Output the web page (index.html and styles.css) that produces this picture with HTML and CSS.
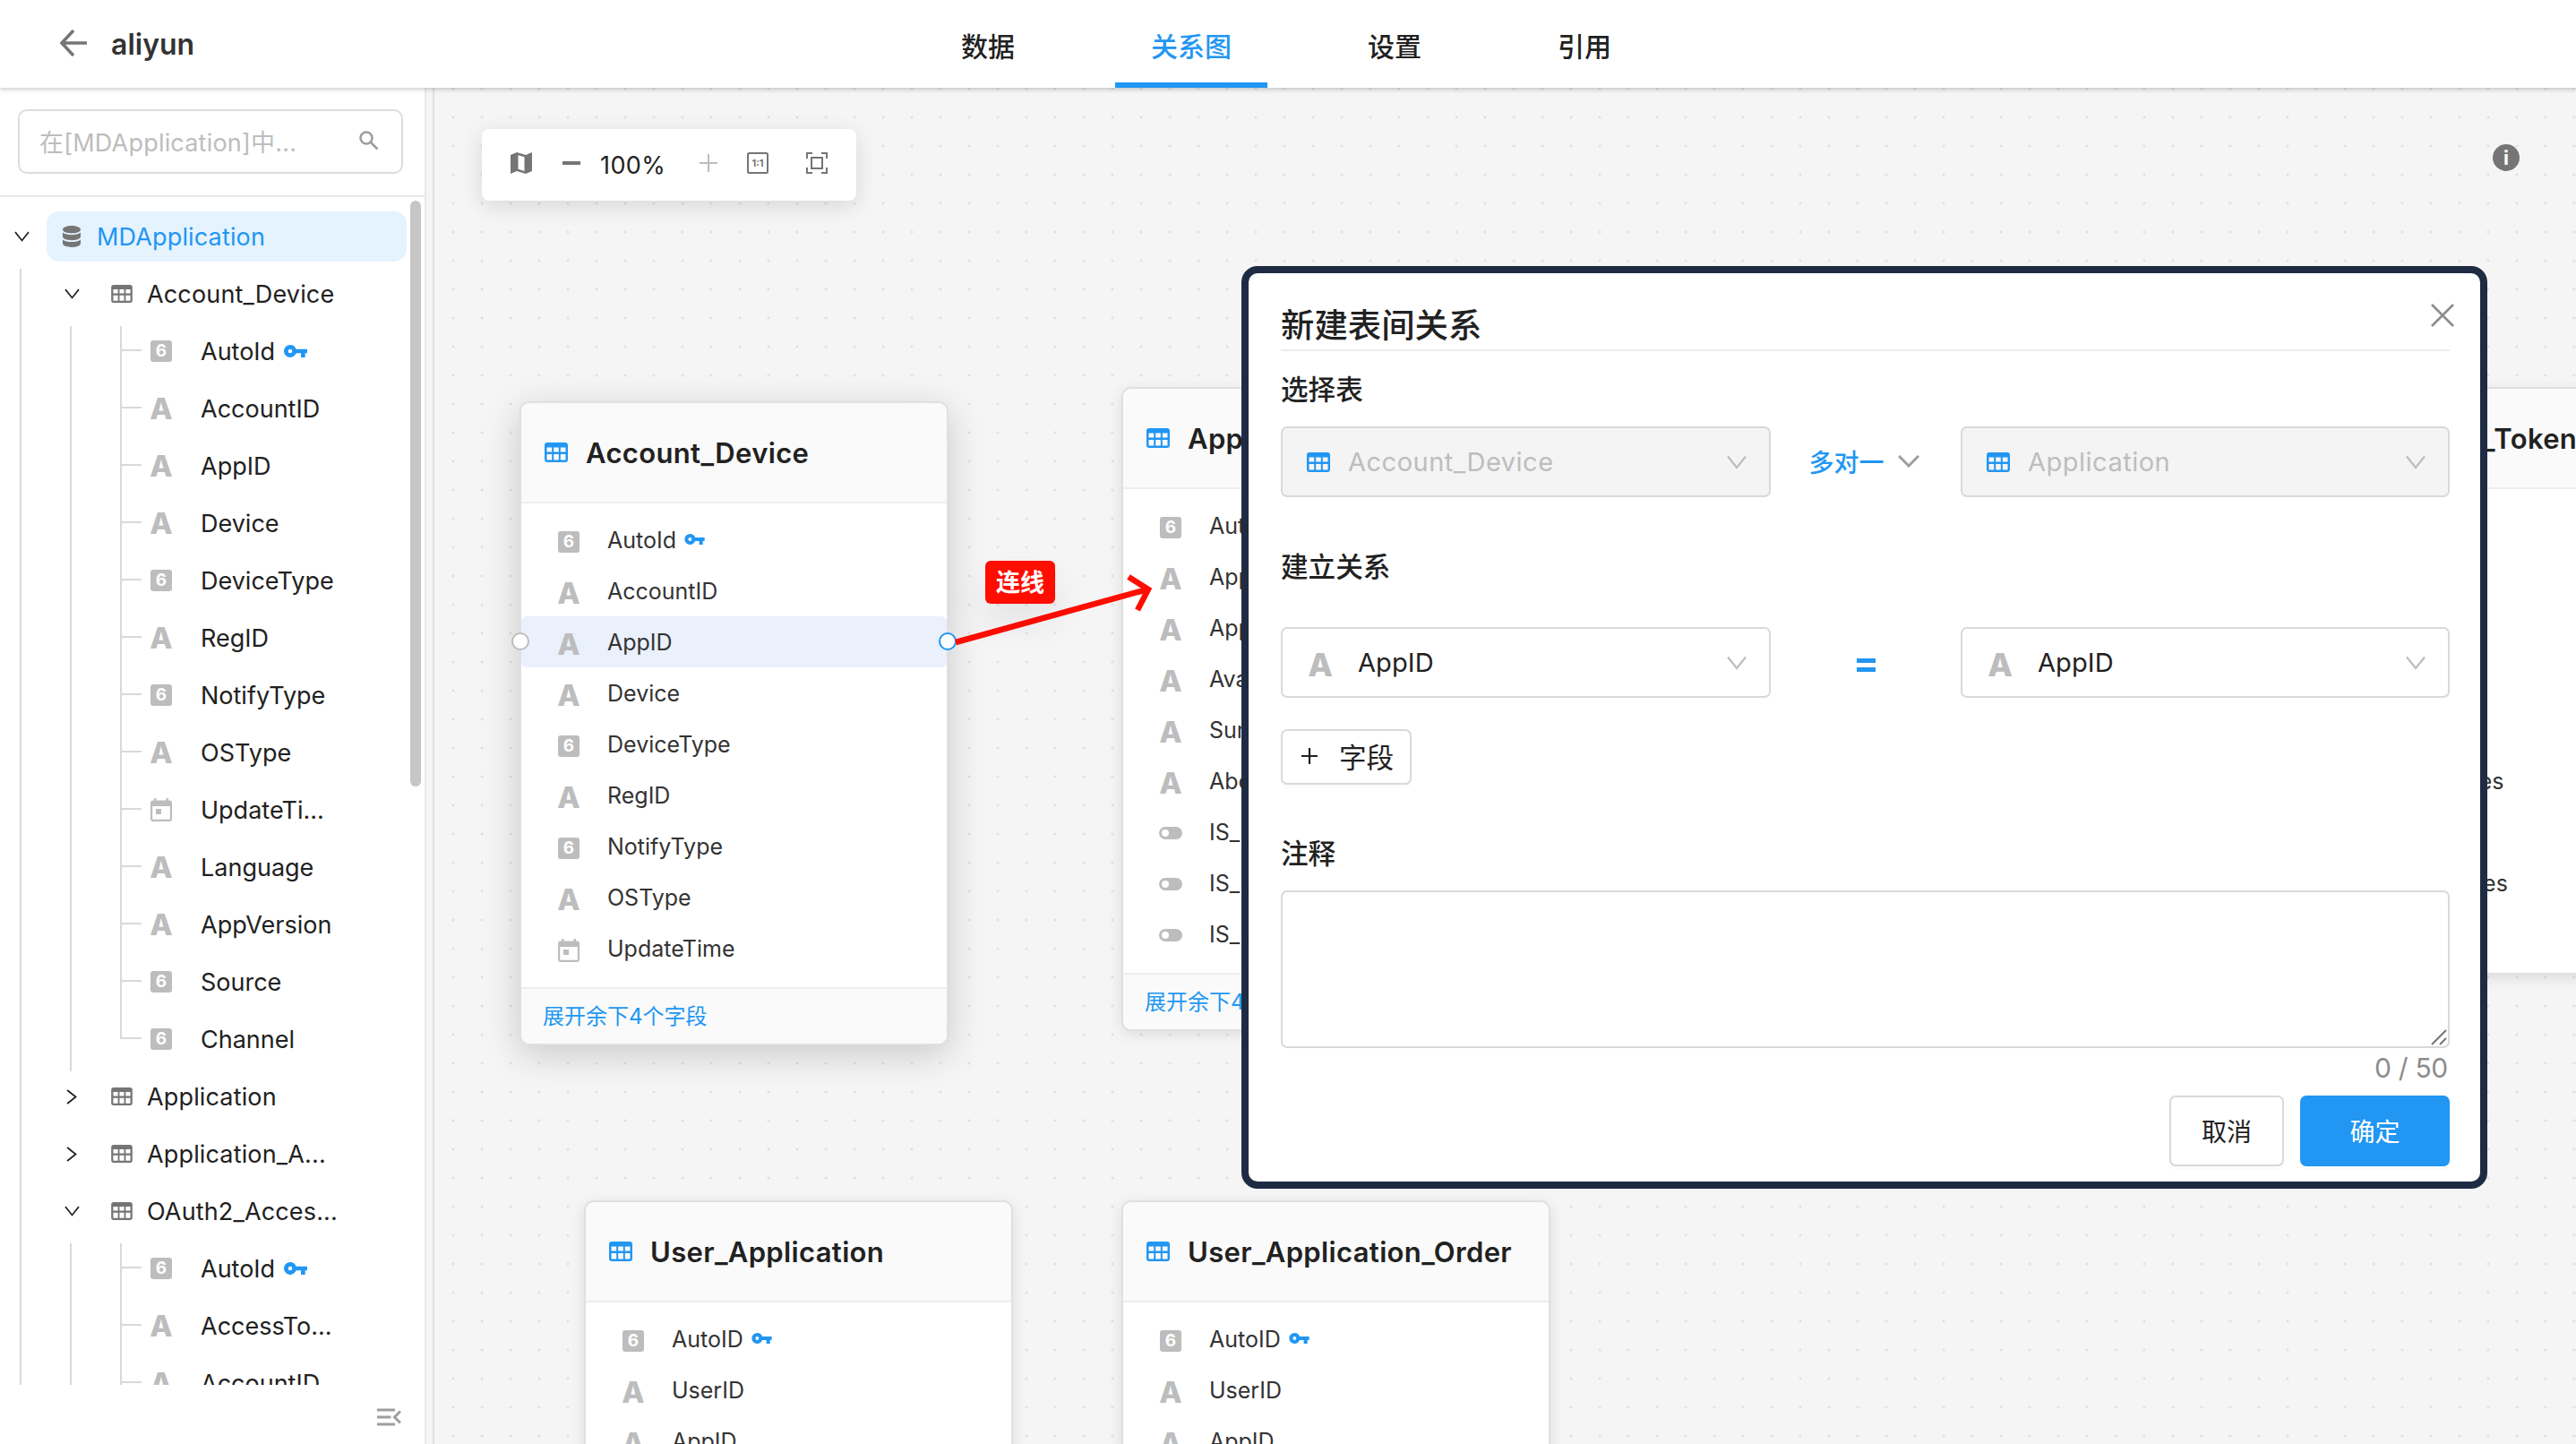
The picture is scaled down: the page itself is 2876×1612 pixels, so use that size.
FILE: index.html
```html
<!DOCTYPE html>
<html lang="zh-CN">
<head>
  <meta charset="UTF-8" />
  <meta name="viewport" content="width=device-width, initial-scale=1.0"/>
  <title>aliyun - 关系图</title>
  <link rel="stylesheet" href="styles.css">
</head>
<body>

  <!-- Icon sprite -->
  <svg class="sprite" xmlns="http://www.w3.org/2000/svg">
    <symbol id="i-table" viewBox="0 0 26 22">
      <path fill="currentColor" fill-rule="evenodd" d="M3 0H23Q26 0 26 3V19Q26 22 23 22H3Q0 22 0 19V3Q0 0 3 0ZM2.500 5.500V10.500H8.200V5.500ZM10.200 5.500V10.500H15.800V5.500ZM17.800 5.500V10.500H23.500V5.500ZM2.500 13V19.500H8.200V13ZM10.200 13V19.500H15.800V13ZM17.800 13V19.500H23.500V13Z"/>
    </symbol>
    <symbol id="i-db" viewBox="0 0 20 24">
      <path fill="currentColor" d="M10 0C15.500 0 20 1.800 20 4.200S15.500 8.400 10 8.400 0 6.600 0 4.200 4.500 0 10 0ZM0 7.600C2 9.500 6 10.200 10 10.200S18 9.500 20 7.600V12C20 14.400 15.500 16.200 10 16.200S0 14.400 0 12ZM0 15.400C2 17.300 6 18 10 18S18 17.300 20 15.400V19.800C20 22.200 15.500 24 10 24S0 22.200 0 19.800Z"/>
    </symbol>
    <symbol id="i-key" viewBox="0 0 26 14">
      <path fill="currentColor" fill-rule="evenodd" d="M7 0A7 7 0 0 1 13.600 4.700H26V9.300H23.700V14H19V9.300H13.600A7 7 0 1 1 7 0ZM7 4.700A2.300 2.300 0 1 0 7 9.300 2.300 2.300 0 1 0 7 4.700Z"/>
    </symbol>
    <symbol id="i-date" viewBox="0 0 24 26">
      <path fill="currentColor" fill-rule="evenodd" d="M4 0H6.500V2.500H17.500V0H20V2.500H21Q24 2.500 24 5.500V23Q24 26 21 26H3Q0 26 0 23V5.500Q0 2.500 3 2.500H4ZM2.200 9V23.800H21.800V9ZM6 12H12V18H6Z"/>
    </symbol>
    <symbol id="i-switch" viewBox="0 0 26 14">
      <path fill="currentColor" fill-rule="evenodd" d="M7 0H19A7 7 0 0 1 19 14H7A7 7 0 0 1 7 0ZM7 3A4 4 0 1 0 7 11 4 4 0 1 0 7 3Z"/>
    </symbol>
    <symbol id="i-down" viewBox="0 0 22 16">
      <path fill="none" stroke="currentColor" stroke-width="2.200" d="M1 1.500L11 14L21 1.500"/>
    </symbol>
    <symbol id="i-right" viewBox="0 0 16 22">
      <path fill="none" stroke="currentColor" stroke-width="2.400" d="M1.500 1L14 11L1.500 21"/>
    </symbol>
  </svg>

  <!-- Header -->
  <header class="header">
    <div class="header-left">
      <svg class="back" viewBox="0 0 30 30"><path d="M30 15H2M15 1L2 15L15 29"/></svg>
      <span class="app-name">aliyun</span>
    </div>
    <nav class="tabs">
      <a class="tab">数据</a>
      <a class="tab active">关系图</a>
      <a class="tab">设置</a>
      <a class="tab">引用</a>
    </nav>
  </header>

  <div class="main">

    <!-- Sidebar -->
    <aside class="sidebar">
      <div class="search-wrap">
        <div class="search">
          <span>在[MDApplication]中...</span>
          <svg viewBox="0 0 22 22"><circle cx="8" cy="8" r="6.500"/><path d="M13 13L20.500 20.500"/></svg>
        </div>
      </div>

      <div class="tree">
        <div class="node selected">
          <span class="switcher"><svg class="caret"><use href="#i-down"/></svg></span>
          <div class="node-title"><svg class="db"><use href="#i-db"/></svg><span>MDApplication</span></div>
        </div>
        <div class="node">
          <i class="indent"></i><span class="switcher"><svg class="caret"><use href="#i-down"/></svg></span>
          <div class="node-title"><svg class="table"><use href="#i-table"/></svg><span>Account_Device</span></div>
        </div>
        <div class="node field"><i class="indent"></i><i class="indent"></i><i class="leaf"></i><b class="num">6</b><span>AutoId</span><svg class="key"><use href="#i-key"/></svg></div>
        <div class="node field"><i class="indent"></i><i class="indent"></i><i class="leaf"></i><b class="txt">A</b><span>AccountID</span></div>
        <div class="node field"><i class="indent"></i><i class="indent"></i><i class="leaf"></i><b class="txt">A</b><span>AppID</span></div>
        <div class="node field"><i class="indent"></i><i class="indent"></i><i class="leaf"></i><b class="txt">A</b><span>Device</span></div>
        <div class="node field"><i class="indent"></i><i class="indent"></i><i class="leaf"></i><b class="num">6</b><span>DeviceType</span></div>
        <div class="node field"><i class="indent"></i><i class="indent"></i><i class="leaf"></i><b class="txt">A</b><span>RegID</span></div>
        <div class="node field"><i class="indent"></i><i class="indent"></i><i class="leaf"></i><b class="num">6</b><span>NotifyType</span></div>
        <div class="node field"><i class="indent"></i><i class="indent"></i><i class="leaf"></i><b class="txt">A</b><span>OSType</span></div>
        <div class="node field"><i class="indent"></i><i class="indent"></i><i class="leaf"></i><svg class="date"><use href="#i-date"/></svg><span>UpdateTi...</span></div>
        <div class="node field"><i class="indent"></i><i class="indent"></i><i class="leaf"></i><b class="txt">A</b><span>Language</span></div>
        <div class="node field"><i class="indent"></i><i class="indent"></i><i class="leaf"></i><b class="txt">A</b><span>AppVersion</span></div>
        <div class="node field"><i class="indent"></i><i class="indent"></i><i class="leaf"></i><b class="num">6</b><span>Source</span></div>
        <div class="node field last"><i class="indent"></i><i class="indent"></i><i class="leaf"></i><b class="num">6</b><span>Channel</span></div>
        <div class="node">
          <i class="indent"></i><span class="switcher"><svg class="caret-right"><use href="#i-right"/></svg></span>
          <div class="node-title"><svg class="table"><use href="#i-table"/></svg><span>Application</span></div>
        </div>
        <div class="node">
          <i class="indent"></i><span class="switcher"><svg class="caret-right"><use href="#i-right"/></svg></span>
          <div class="node-title"><svg class="table"><use href="#i-table"/></svg><span>Application_A...</span></div>
        </div>
        <div class="node">
          <i class="indent"></i><span class="switcher"><svg class="caret"><use href="#i-down"/></svg></span>
          <div class="node-title"><svg class="table"><use href="#i-table"/></svg><span>OAuth2_Acces...</span></div>
        </div>
        <div class="node field"><i class="indent"></i><i class="indent"></i><i class="leaf"></i><b class="num">6</b><span>AutoId</span><svg class="key"><use href="#i-key"/></svg></div>
        <div class="node field"><i class="indent"></i><i class="indent"></i><i class="leaf"></i><b class="txt">A</b><span>AccessTo...</span></div>
        <div class="node field"><i class="indent"></i><i class="indent"></i><i class="leaf"></i><b class="txt">A</b><span>AccountID</span></div>
        <div class="scrollbar"></div>
      </div>

      <div class="sidebar-footer">
        <svg viewBox="0 0 27 20"><path d="M0 2H20M0 10H15.500M0 18H20M26 3.500L19.500 10L26 16.500"/></svg>
      </div>
    </aside>
    <div class="resizer"></div>

    <!-- ER canvas -->
    <section class="canvas">
      <div class="toolbar">
        <svg class="map" viewBox="0 0 24 24"><path d="M0 3L7 0L17 3L24 0V21L17 24L7 21L0 24ZM8.500 3.200V18.800L15.500 21V5.200Z"/></svg>
        <i class="minus"></i>
        <span class="zoom">100%</span>
        <svg class="plus" viewBox="0 0 20 20"><path d="M10 0V20M0 10H20"/></svg>
        <svg class="one" viewBox="0 0 24 24"><rect x="1" y="1" width="22" height="22" rx="1.500"/><text x="12" y="16">1:1</text></svg>
        <svg class="fit" viewBox="0 0 24 24"><path d="M1 7V1H7M17 1H23V7M23 17V23H17M7 23H1V17M6 6H18V18H6Z"/></svg>
      </div>

      <div class="info">i</div>

      <div class="card hover account-device">
        <div class="card-head"><svg><use href="#i-table"/></svg>Account_Device</div>
        <div class="card-body">
          <div class="row"><b class="num">6</b>AutoId<svg class="key"><use href="#i-key"/></svg></div>
          <div class="row"><b class="txt">A</b>AccountID</div>
          <div class="row current"><b class="txt">A</b>AppID<i class="port left"></i><i class="port right"></i></div>
          <div class="row"><b class="txt">A</b>Device</div>
          <div class="row"><b class="num">6</b>DeviceType</div>
          <div class="row"><b class="txt">A</b>RegID</div>
          <div class="row"><b class="num">6</b>NotifyType</div>
          <div class="row"><b class="txt">A</b>OSType</div>
          <div class="row"><svg class="date"><use href="#i-date"/></svg>UpdateTime</div>
        </div>
        <div class="card-foot">展开余下4个字段</div>
      </div>

      <div class="card application">
        <div class="card-head"><svg><use href="#i-table"/></svg>Application</div>
        <div class="card-body">
          <div class="row"><b class="num">6</b>AutoId</div>
          <div class="row"><b class="txt">A</b>AppID</div>
          <div class="row"><b class="txt">A</b>AppName</div>
          <div class="row"><b class="txt">A</b>Avatar</div>
          <div class="row"><b class="txt">A</b>Summary</div>
          <div class="row"><b class="txt">A</b>About</div>
          <div class="row"><svg class="switch"><use href="#i-switch"/></svg>IS_</div>
          <div class="row"><svg class="switch"><use href="#i-switch"/></svg>IS_</div>
          <div class="row"><svg class="switch"><use href="#i-switch"/></svg>IS_</div>
        </div>
        <div class="card-foot">展开余下4个字段</div>
      </div>

      <div class="card access-token">
        <div class="card-head"><svg><use href="#i-table"/></svg>OAuth2_Access_Token</div>
        <div class="card-body">
          <div class="row"></div>
          <div class="row"></div>
          <div class="row"></div>
          <div class="row"></div>
          <div class="row"></div>
          <div class="row"><b class="txt">A</b>AccessTokenExpires</div>
          <div class="row"></div>
          <div class="row"><b class="txt">A</b>RefreshTokenExpires</div>
          <div class="row"></div>
        </div>
      </div>

      <div class="card user-application">
        <div class="card-head"><svg><use href="#i-table"/></svg>User_Application</div>
        <div class="card-body">
          <div class="row"><b class="num">6</b>AutoID<svg class="key"><use href="#i-key"/></svg></div>
          <div class="row"><b class="txt">A</b>UserID</div>
          <div class="row"><b class="txt">A</b>AppID</div>
        </div>
      </div>

      <div class="card user-application-order">
        <div class="card-head"><svg><use href="#i-table"/></svg>User_Application_Order</div>
        <div class="card-body">
          <div class="row"><b class="num">6</b>AutoID<svg class="key"><use href="#i-key"/></svg></div>
          <div class="row"><b class="txt">A</b>UserID</div>
          <div class="row"><b class="txt">A</b>AppID</div>
        </div>
      </div>

      <!-- Connection being drawn -->
      <svg class="link" viewBox="0 0 230 90"><path d="M5 81L219 22M198 8L220 22L208 45"/></svg>
      <div class="link-label">连线</div>
    </section>
  </div>

  <!-- New relation dialog -->
  <div class="modal">
    <svg class="close" viewBox="0 0 26 26"><path d="M1 1L25 25M25 1L1 25"/></svg>
    <h2>新建表间关系</h2>

    <h3 class="label-first">选择表</h3>
    <div class="pair pair-tables">
      <div class="select disabled"><svg class="table"><use href="#i-table"/></svg><span>Account_Device</span><svg class="arrow"><use href="#i-down"/></svg></div>
      <div class="relation">多对一<svg viewBox="0 0 24 14"><path d="M1 1L12 12L23 1"/></svg></div>
      <div class="select disabled"><svg class="table"><use href="#i-table"/></svg><span>Application</span><svg class="arrow"><use href="#i-down"/></svg></div>
    </div>

    <h3 class="label-relation">建立关系</h3>
    <div class="pair pair-fields">
      <div class="select"><b class="txt">A</b><span>AppID</span><svg class="arrow"><use href="#i-down"/></svg></div>
      <div class="equal"></div>
      <div class="select"><b class="txt">A</b><span>AppID</span><svg class="arrow"><use href="#i-down"/></svg></div>
    </div>
    <div class="btn add-field"><svg viewBox="0 0 18 18"><path d="M9 0V18M0 9H18"/></svg><span>字段</span></div>

    <h3 class="label-note">注释</h3>
    <div class="note"><svg viewBox="0 0 18 18"><path d="M1 17L17 1M10 17L17 10"/></svg></div>
    <div class="count">0 / 50</div>
    <div class="modal-footer">
      <div class="btn cancel">取消</div>
      <div class="btn primary">确定</div>
    </div>
  </div>

</body>
</html>
```
FILE: styles.css
```css
* {
  box-sizing: border-box;
}

body {
  margin: 0;
  height: 1612px;
  overflow: hidden;
  position: relative;
  display: flex;
  flex-direction: column;
  font-family: Inter, "Noto Sans CJK SC", sans-serif;
  font-size: 27px;
  color: #212121;
  background: #f5f5f5;
}

svg {
  display: block;
  flex-shrink: 0;
}

.sprite {
  position: absolute;
  width: 0;
  height: 0;
}

/* Header */
.header {
  position: relative;
  z-index: 5;
  flex: 0 0 98px;
  display: flex;
  background: #fff;
  box-shadow: 0 2px 5px rgba(0, 0, 0, 0.2);
}

.header-left {
  display: flex;
  align-items: center;
  width: 1033px;
  padding: 0 0 2px 67px;
}

.back {
  width: 30px;
  height: 30px;
  fill: none;
  stroke: #757575;
  stroke-width: 3.5;
}

.app-name {
  margin-left: 27px;
  padding-top: 2px;
  font-size: 32px;
  font-weight: 600;
  color: #333;
}

.tabs {
  display: flex;
  gap: 72px;
}

.tab {
  padding: 4px 40px 0;
  border-bottom: 6px solid transparent;
  font-size: 30px;
  font-weight: 500;
  line-height: 96px;
  height: 98px;
}

.tab.active {
  color: #2196f3;
  border-color: #2196f3;
}

.main {
  flex: 1;
  min-height: 0;
  display: flex;
}

/* Sidebar */
.sidebar {
  width: 476px;
  display: flex;
  flex-direction: column;
  background: #fff;
  border-right: 2px solid #e8e8e8;
}

.resizer {
  width: 9px;
  border-right: 2px solid #e0e0e0;
}

.search-wrap {
  height: 122px;
  padding: 24px 24px 0 20px;
  border-bottom: 2px solid #eaeaea;
}

.search {
  height: 72px;
  display: flex;
  align-items: center;
  justify-content: space-between;
  padding: 0 25px 2px 22px;
  border: 2px solid #ddd;
  border-radius: 10px;
  color: #bdbdbd;
  letter-spacing: 0.2px;
}

.search svg {
  width: 22px;
  height: 22px;
  fill: none;
  stroke: #9e9e9e;
  stroke-width: 2.6;
}

.tree {
  position: relative;
  height: 1326px;
  padding-top: 16px;
  overflow: hidden;
}

.node {
  display: flex;
  height: 64px;
  padding: 0 20px 8px 0;
  line-height: 56px;
  white-space: nowrap;
}

.node span {
  padding-top: 1px;
}

.indent,
.leaf {
  position: relative;
  flex: 0 0 56px;
  height: 64px;
}

.indent::before,
.leaf::before {
  content: "";
  position: absolute;
  left: 22px;
  top: 0;
  bottom: 0;
  width: 2px;
  background: #d9d9d9;
}

.leaf::after {
  content: "";
  position: absolute;
  left: 24px;
  top: 26px;
  width: 22px;
  height: 2px;
  background: #d9d9d9;
}

.last .leaf::before {
  bottom: 36px;
}

.node .switcher {
  flex: 0 0 48px;
  margin-right: 4px;
  padding: 0;
  display: flex;
  align-items: center;
  justify-content: center;
}

.caret {
  width: 17px;
  height: 12px;
}

.caret-right {
  width: 12px;
  height: 17px;
}

.node-title {
  flex: 1;
  display: flex;
  align-items: center;
  padding-left: 16px;
  border-radius: 14px;
  letter-spacing: 0.15px;
}

.selected .node-title {
  background: #e5f3ff;
  color: #2196f3;
}

.db {
  width: 20px;
  height: 24px;
  margin: 0 18px 0 2px;
  color: #757575;
}

.table {
  width: 24px;
  height: 20px;
  margin-right: 16px;
  color: #757575;
}

.field {
  align-items: center;
}

.field .indent,
.field .leaf {
  align-self: flex-start;
}

/* Field type icons */
.num,
.txt,
.date {
  flex: 0 0 24px;
  width: 24px;
  height: 24px;
  margin-right: 32px;
  text-align: center;
  color: #bdbdbd;
}

.num {
  border-radius: 3px;
  background: #bdbdbd;
  color: #fff;
  font-size: 19px;
  line-height: 24px;
}

.txt {
  display: flex;
  justify-content: center;
  font-size: 33px;
  line-height: 24px;
  font-weight: 800;
}

.date {
  height: 26px;
}

.key {
  width: 26px;
  height: 14px;
  margin-left: 10px;
  color: #2196f3;
}

.scrollbar {
  position: absolute;
  right: 4px;
  top: 4px;
  width: 12px;
  height: 654px;
  border-radius: 6px;
  background: #c6c6c6;
}

.sidebar-footer {
  display: flex;
  justify-content: flex-end;
  padding: 26px 26px 0 0;
}

.sidebar-footer svg {
  width: 27px;
  height: 20px;
  fill: none;
  stroke: #9e9e9e;
  stroke-width: 3;
}

/* Canvas */
.canvas {
  position: relative;
  flex: 1;
  overflow: hidden;
  background: #f5f5f5 radial-gradient(circle, #e0e0e0 1.2px, transparent 1.8px) 5px 17px / 32px 32px;
}

.toolbar {
  position: absolute;
  left: 53px;
  top: 46px;
  width: 418px;
  height: 80px;
  display: flex;
  align-items: center;
  padding: 0 32px 4px;
  border-radius: 8px;
  background: #fff;
  box-shadow: 0 6px 24px rgba(0, 0, 0, 0.12);
}

.toolbar svg {
  width: 24px;
  height: 24px;
  fill: none;
  stroke: #757575;
  stroke-width: 2;
}

.toolbar .map {
  fill: #757575;
  fill-rule: evenodd;
  stroke: none;
}

.minus {
  width: 20px;
  height: 4px;
  margin-left: 34px;
  background: #757575;
}

.zoom {
  width: 133px;
  padding: 4px 0 0 22px;
  letter-spacing: 0.4px;
}

.toolbar .plus {
  width: 20px;
  height: 20px;
  stroke: #bdbdbd;
}

.toolbar .one {
  margin-left: 33px;
}

.one text {
  fill: #757575;
  stroke: none;
  font-size: 11px;
  font-weight: 700;
  text-anchor: middle;
}

.toolbar .fit {
  margin-left: 42px;
}

.info {
  position: absolute;
  right: 63px;
  top: 63px;
  width: 30px;
  height: 30px;
  border-radius: 50%;
  background: #757575;
  color: #fff;
  font-size: 22px;
  font-weight: 700;
  line-height: 30px;
  text-align: center;
}

.card {
  position: absolute;
  width: 479px;
  border: 2px solid #e0e0e0;
  border-radius: 11px;
  background: #fff;
  box-shadow: 0 4px 16px rgba(0, 0, 0, 0.1);
}

.card.hover {
  box-shadow: 0 10px 40px rgba(0, 0, 0, 0.18);
}

.account-device {
  left: 95px;
  top: 350px;
}

.application {
  left: 767px;
  top: 334px;
}

.access-token {
  left: 1969px;
  top: 334px;
}

.user-application {
  left: 167px;
  top: 1242px;
}

.user-application-order {
  left: 767px;
  top: 1242px;
}

.card-head {
  display: flex;
  align-items: center;
  height: 112px;
  padding-left: 26px;
  border-bottom: 2px solid #eee;
  border-radius: 9px 9px 0 0;
  background: #fafafa;
  font-size: 31px;
  font-weight: 600;
  letter-spacing: 0.35px;
  white-space: nowrap;
}

.card-head svg {
  width: 26px;
  height: 22px;
  margin-right: 20px;
  color: #2196f3;
}

.card-body {
  padding: 12px 0 15px;
}

.row {
  position: relative;
  display: flex;
  align-items: center;
  height: 57px;
  padding-left: 41px;
  border-radius: 6px;
  font-size: 25px;
  color: #333;
}

.row .num,
.row .txt,
.row .date,
.row .switch {
  margin: 4px 31px 0 0;
}

.row .key {
  width: 23px;
  height: 12px;
  margin: 0 0 1px 9px;
}

.row .switch {
  width: 26px;
  height: 14px;
  margin: 3px 30px 0 -1px;
  color: #bdbdbd;
}

.current {
  background: #eaf0fc;
}

.port {
  position: absolute;
  top: 18px;
  width: 20px;
  height: 20px;
  border: 2px solid #bdbdbd;
  border-radius: 50%;
  background: #fff;
}

.port.left {
  left: -11px;
}

.port.right {
  right: -11px;
  border-color: #2196f3;
}

.card-foot {
  height: 63px;
  padding-left: 24px;
  border-top: 2px solid #eee;
  border-radius: 0 0 9px 9px;
  background: #fafafa;
  font-size: 24px;
  line-height: 61px;
  color: #2196f3;
}

.link {
  position: absolute;
  left: 577px;
  top: 538px;
  width: 230px;
  height: 90px;
  fill: none;
  stroke: #ff0d00;
  stroke-width: 6.5;
}

.link-label {
  position: absolute;
  left: 615px;
  top: 528px;
  width: 78px;
  height: 48px;
  border-radius: 6px;
  background: #ff0d00;
  box-shadow: 0 20px 40px rgba(0, 0, 0, 0.08);
  color: #fff;
  font-size: 27px;
  font-weight: 700;
  line-height: 49px;
  text-align: center;
}

/* Dialog */
.modal {
  position: absolute;
  left: 1386px;
  top: 297px;
  z-index: 10;
  width: 1391px;
  height: 1030px;
  padding: 28px 34px 0 36px;
  border: 8px solid #1e2b43;
  border-radius: 18px;
  background: #fff;
  font-size: 30px;
}

.modal h2 {
  height: 59px;
  margin: 0;
  padding-top: 3px;
  border-bottom: 2px solid #ececec;
  font-size: 37.4px;
  font-weight: 500;
  line-height: 56px;
}

.modal h3 {
  margin: 0;
  font-size: 30.6px;
  font-weight: 500;
  line-height: 41px;
}

.modal h3.label-first {
  margin-top: 22px;
}

.modal h3.label-relation {
  margin-top: 57px;
}

.modal h3.label-note {
  margin-top: 56px;
}

.close {
  position: absolute;
  right: 29px;
  top: 34px;
  width: 26px;
  height: 26px;
  fill: none;
  stroke: #8c8c8c;
  stroke-width: 2.6;
}

.pair {
  display: grid;
  grid-template-columns: 547px 1fr 546px;
  align-items: center;
}

.pair-tables {
  margin-top: 21px;
}

.pair-fields {
  margin-top: 47px;
}

.select {
  display: flex;
  align-items: center;
  height: 79px;
  padding: 0 25px 0 27px;
  border: 2px solid #d9d9d9;
  border-radius: 7px;
  font-size: 29px;
}

.select.disabled {
  background: #f4f4f4;
  color: #bdbdbd;
}

.select span {
  flex: 1;
  letter-spacing: 0.1px;
}

.select.disabled span {
  letter-spacing: 0.5px;
}

.select .table {
  width: 26px;
  height: 22px;
  margin-right: 20px;
  color: #2196f3;
}

.select .txt {
  margin: 5px 30px 0 3px;
  font-size: 36px;
}

.arrow {
  width: 22px;
  height: 16px;
  color: #bdbdbd;
}

.relation {
  display: flex;
  align-items: center;
  justify-content: center;
  gap: 15px;
  padding: 0 4px 1px 0;
  color: #2196f3;
  font-size: 28px;
  font-weight: 500;
}

.relation svg {
  width: 24px;
  height: 14px;
  fill: none;
  stroke: #9e9e9e;
  stroke-width: 3;
}

.equal {
  justify-self: center;
  width: 21px;
  height: 15px;
  margin-top: 6px;
  border: solid #2196f3;
  border-width: 5px 0;
}

.btn {
  display: flex;
  align-items: center;
  justify-content: center;
  border: 2px solid #d9d9d9;
  border-radius: 7px;
  box-shadow: 0 4px 0 rgba(0, 0, 0, 0.015);
  background: #fff;
}

.add-field {
  width: 146px;
  height: 62px;
  margin-top: 35px;
  padding: 0 0 2px 3px;
  gap: 24px;
  font-size: 30.6px;
}

.add-field svg {
  width: 18px;
  height: 18px;
  stroke: #212121;
  stroke-width: 2.2;
}

.note {
  display: flex;
  align-items: flex-end;
  justify-content: flex-end;
  height: 176px;
  margin-top: 21px;
  border: 2px solid #d9d9d9;
  border-radius: 7px;
}

.note svg {
  width: 18px;
  height: 18px;
  margin: 1px;
  stroke: #757575;
  stroke-width: 2;
}

.count {
  margin-top: 2px;
  padding-right: 2px;
  line-height: 40px;
  letter-spacing: -0.3px;
  text-align: right;
  color: #8c8c8c;
}

.modal-footer {
  display: flex;
  justify-content: flex-end;
  gap: 18px;
  margin-top: 11px;
  font-size: 28px;
}

.modal-footer .btn {
  height: 79px;
  padding-bottom: 2px;
}

.cancel {
  width: 128px;
}

.primary {
  width: 167px;
  border-color: #2196f3;
  background: #2196f3;
  color: #fff;
}
```
